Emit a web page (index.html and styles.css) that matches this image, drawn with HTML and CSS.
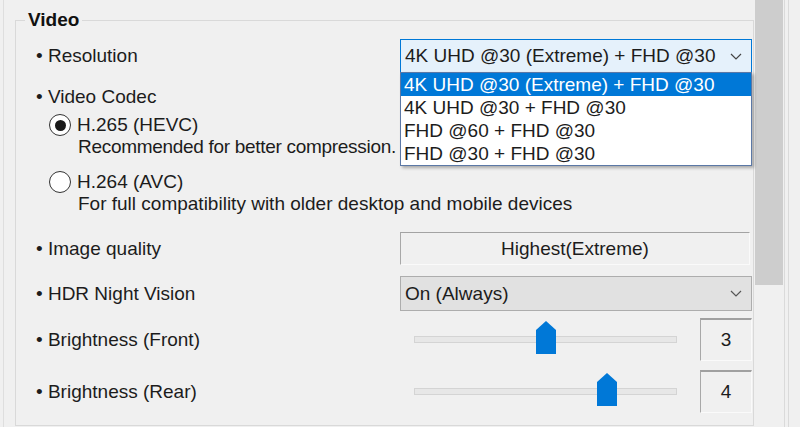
FILE: index.html
```html
<!DOCTYPE html>
<html>
<head>
<meta charset="utf-8">
<link rel="stylesheet" href="styles.css">
</head>
<body>
<div class="window">
  <div class="pane">
    <fieldset class="group">
      <legend>Video</legend>
      <div class="rows">
        <div class="row row-res">
          <div class="label">• Resolution</div>
          <div class="combo combo-open">
            <span>4K UHD @30 (Extreme) + FHD @30</span>
            <svg class="chev" width="12" height="7" viewBox="0 0 12 7"><path d="M1 1 L6 6 L11 1" fill="none" stroke="#444" stroke-width="1.2"/></svg>
            <ul class="dropdown">
              <li class="sel">4K UHD @30 (Extreme) + FHD @30</li>
              <li>4K UHD @30 + FHD @30</li>
              <li>FHD @60 + FHD @30</li>
              <li>FHD @30 + FHD @30</li>
            </ul>
          </div>
        </div>
        <div class="codec">
          <div class="label codec-label">• Video Codec</div>
          <div class="choice first"><span class="radio checked"></span><span>H.265 (HEVC)</span></div>
          <div class="desc tight">Recommended for better compression.</div>
          <div class="choice second"><span class="radio"></span><span>H.264 (AVC)</span></div>
          <div class="desc">For full compatibility with older desktop and mobile devices</div>
        </div>
        <div class="row row-quality">
          <div class="label">• Image quality</div>
          <div class="sunken wide">Highest(Extreme)</div>
        </div>
        <div class="row row-hdr">
          <div class="label">• HDR Night Vision</div>
          <div class="combo combo-gray">
            <span>On (Always)</span>
            <svg class="chev" width="12" height="7" viewBox="0 0 12 7"><path d="M1 1 L6 6 L11 1" fill="none" stroke="#555" stroke-width="1.2"/></svg>
          </div>
        </div>
        <div class="row row-slider first-slider">
          <div class="label">• Brightness (Front)</div>
          <div class="slider-ctl">
            <div class="slider"><div class="track"></div><div class="thumb" style="left:122px"></div></div>
            <div class="sunken value">3</div>
          </div>
        </div>
        <div class="row row-slider second-slider">
          <div class="label">• Brightness (Rear)</div>
          <div class="slider-ctl">
            <div class="slider"><div class="track"></div><div class="thumb" style="left:183px"></div></div>
            <div class="sunken value">4</div>
          </div>
        </div>
      </div>
    </fieldset>
  </div>
  <div class="scrollbar"><div class="sb-thumb"></div></div>
  <div class="edge"><div class="edge-inner"></div></div>
</div>
</body>
</html>
```
FILE: styles.css
```css
html, body {
  margin: 0;
  padding: 0;
  background: #f0f0f0;
}
body {
  font-family: "Liberation Sans", Arial, sans-serif;
  font-size: 19px;
  color: #1c1c1c;
}
.window {
  display: flex;
  width: 800px;
  height: 427px;
  overflow: hidden;
}
.pane {
  box-sizing: border-box;
  width: 752px;
  margin-left: 3px;
  border-left: 1px solid #dedede;
  padding: 10px 1px 0 11px;
}
.group {
  box-sizing: border-box;
  width: 739px;
  min-width: 0;
  margin: 0;
  padding: 0 0 12px 0;
  border: 1px solid #d9d9d9;
}
.group legend {
  margin-left: 9px;
  padding: 0 3px;
  font-weight: bold;
  font-size: 19px;
  line-height: 20px;
  color: #111;
}
.rows {
  padding-left: 20px;
}
.row {
  display: grid;
  grid-template-columns: 364px 352px;
  align-items: center;
}
.label {
  line-height: 22px;
  white-space: nowrap;
}
.row-res {
  margin-top: 9px;
  height: 34px;
  position: relative;
  z-index: 2;
}
.combo {
  position: relative;
  box-sizing: border-box;
  height: 100%;
  display: flex;
  align-items: center;
  justify-content: space-between;
  padding: 0 9px 0 4px;
  border: 1px solid #adadad;
  white-space: nowrap;
}
.combo-open {
  background: #e5f1fb;
  border-color: #0078d7;
}
.combo-gray {
  background: #e1e1e1;
}
.chev {
  display: block;
}
.dropdown {
  position: absolute;
  top: 100%;
  left: -1px;
  right: -1px;
  margin: 0;
  padding: 0;
  list-style: none;
  background: #fff;
  border: 1px solid #5b78a6;
  box-shadow: 2px 2px 3px rgba(0, 0, 0, 0.3);
}
.dropdown li {
  height: 23px;
  line-height: 23px;
  padding-left: 3px;
  color: #1c1c1c;
}
.dropdown li.sel {
  background: #0078d7;
  color: #fff;
}
.codec-label {
  margin-top: 13px;
}
.choice {
  display: flex;
  align-items: center;
  gap: 7px;
  margin-left: 14px;
  line-height: 22px;
}
.choice.first {
  margin-top: 6px;
}
.choice.second {
  margin-top: 13px;
}
.radio {
  box-sizing: border-box;
  width: 22px;
  height: 22px;
  margin-left: -1px;
  margin-right: -1px;
  border-radius: 50%;
  border: 1.5px solid #333;
  background: #fff;
  display: grid;
  place-items: center;
  flex: none;
}
.radio.checked::after {
  content: "";
  width: 11px;
  height: 11px;
  border-radius: 50%;
  background: #1a1a1a;
}
.desc {
  margin-left: 42px;
  line-height: 22px;
  white-space: nowrap;
}
.desc.tight {
  letter-spacing: -0.3px;
}
.row-quality {
  margin-top: 17px;
  height: 33px;
}
.sunken {
  box-sizing: border-box;
  height: 100%;
  display: flex;
  align-items: center;
  justify-content: center;
  background: #f0f0f0;
  border-top: 1px solid #a3a3a3;
  border-left: 1px solid #a8a8a8;
  border-right: 1px solid #fafafa;
  border-bottom: 1px solid #fafafa;
}
.wide {
  margin-right: 2px;
}
.row-hdr {
  margin-top: 11px;
  height: 35px;
}
.row-slider {
  height: 43px;
}
.first-slider {
  margin-top: 7px;
}
.second-slider {
  margin-top: 9px;
}
.slider-ctl {
  height: 100%;
  display: grid;
  grid-template-columns: 1fr 52px;
  column-gap: 23px;
  padding-left: 14px;
  align-items: center;
}
.slider {
  position: relative;
  height: 100%;
  display: flex;
  align-items: center;
}
.track {
  box-sizing: border-box;
  width: 100%;
  height: 7px;
  background: #e7e7e7;
  border: 1px solid #d4d4d4;
}
.thumb {
  position: absolute;
  top: 3px;
  width: 20px;
  height: 33px;
  background: #0078d7;
  clip-path: polygon(0 9px, 10px 0, 20px 9px, 20px 100%, 0 100%);
}
.value {
  border-top: 2px solid #a0a0a0;
}
.scrollbar {
  width: 28px;
  flex: none;
  background: #f0f0f0;
}
.sb-thumb {
  height: 285px;
  background: #cdcdcd;
}
.edge {
  flex: 1;
  margin-left: 1px;
  border-left: 1px solid #dadada;
  padding-left: 3px;
}
.edge-inner {
  height: 100%;
  border-left: 1px solid #dadada;
}
```
